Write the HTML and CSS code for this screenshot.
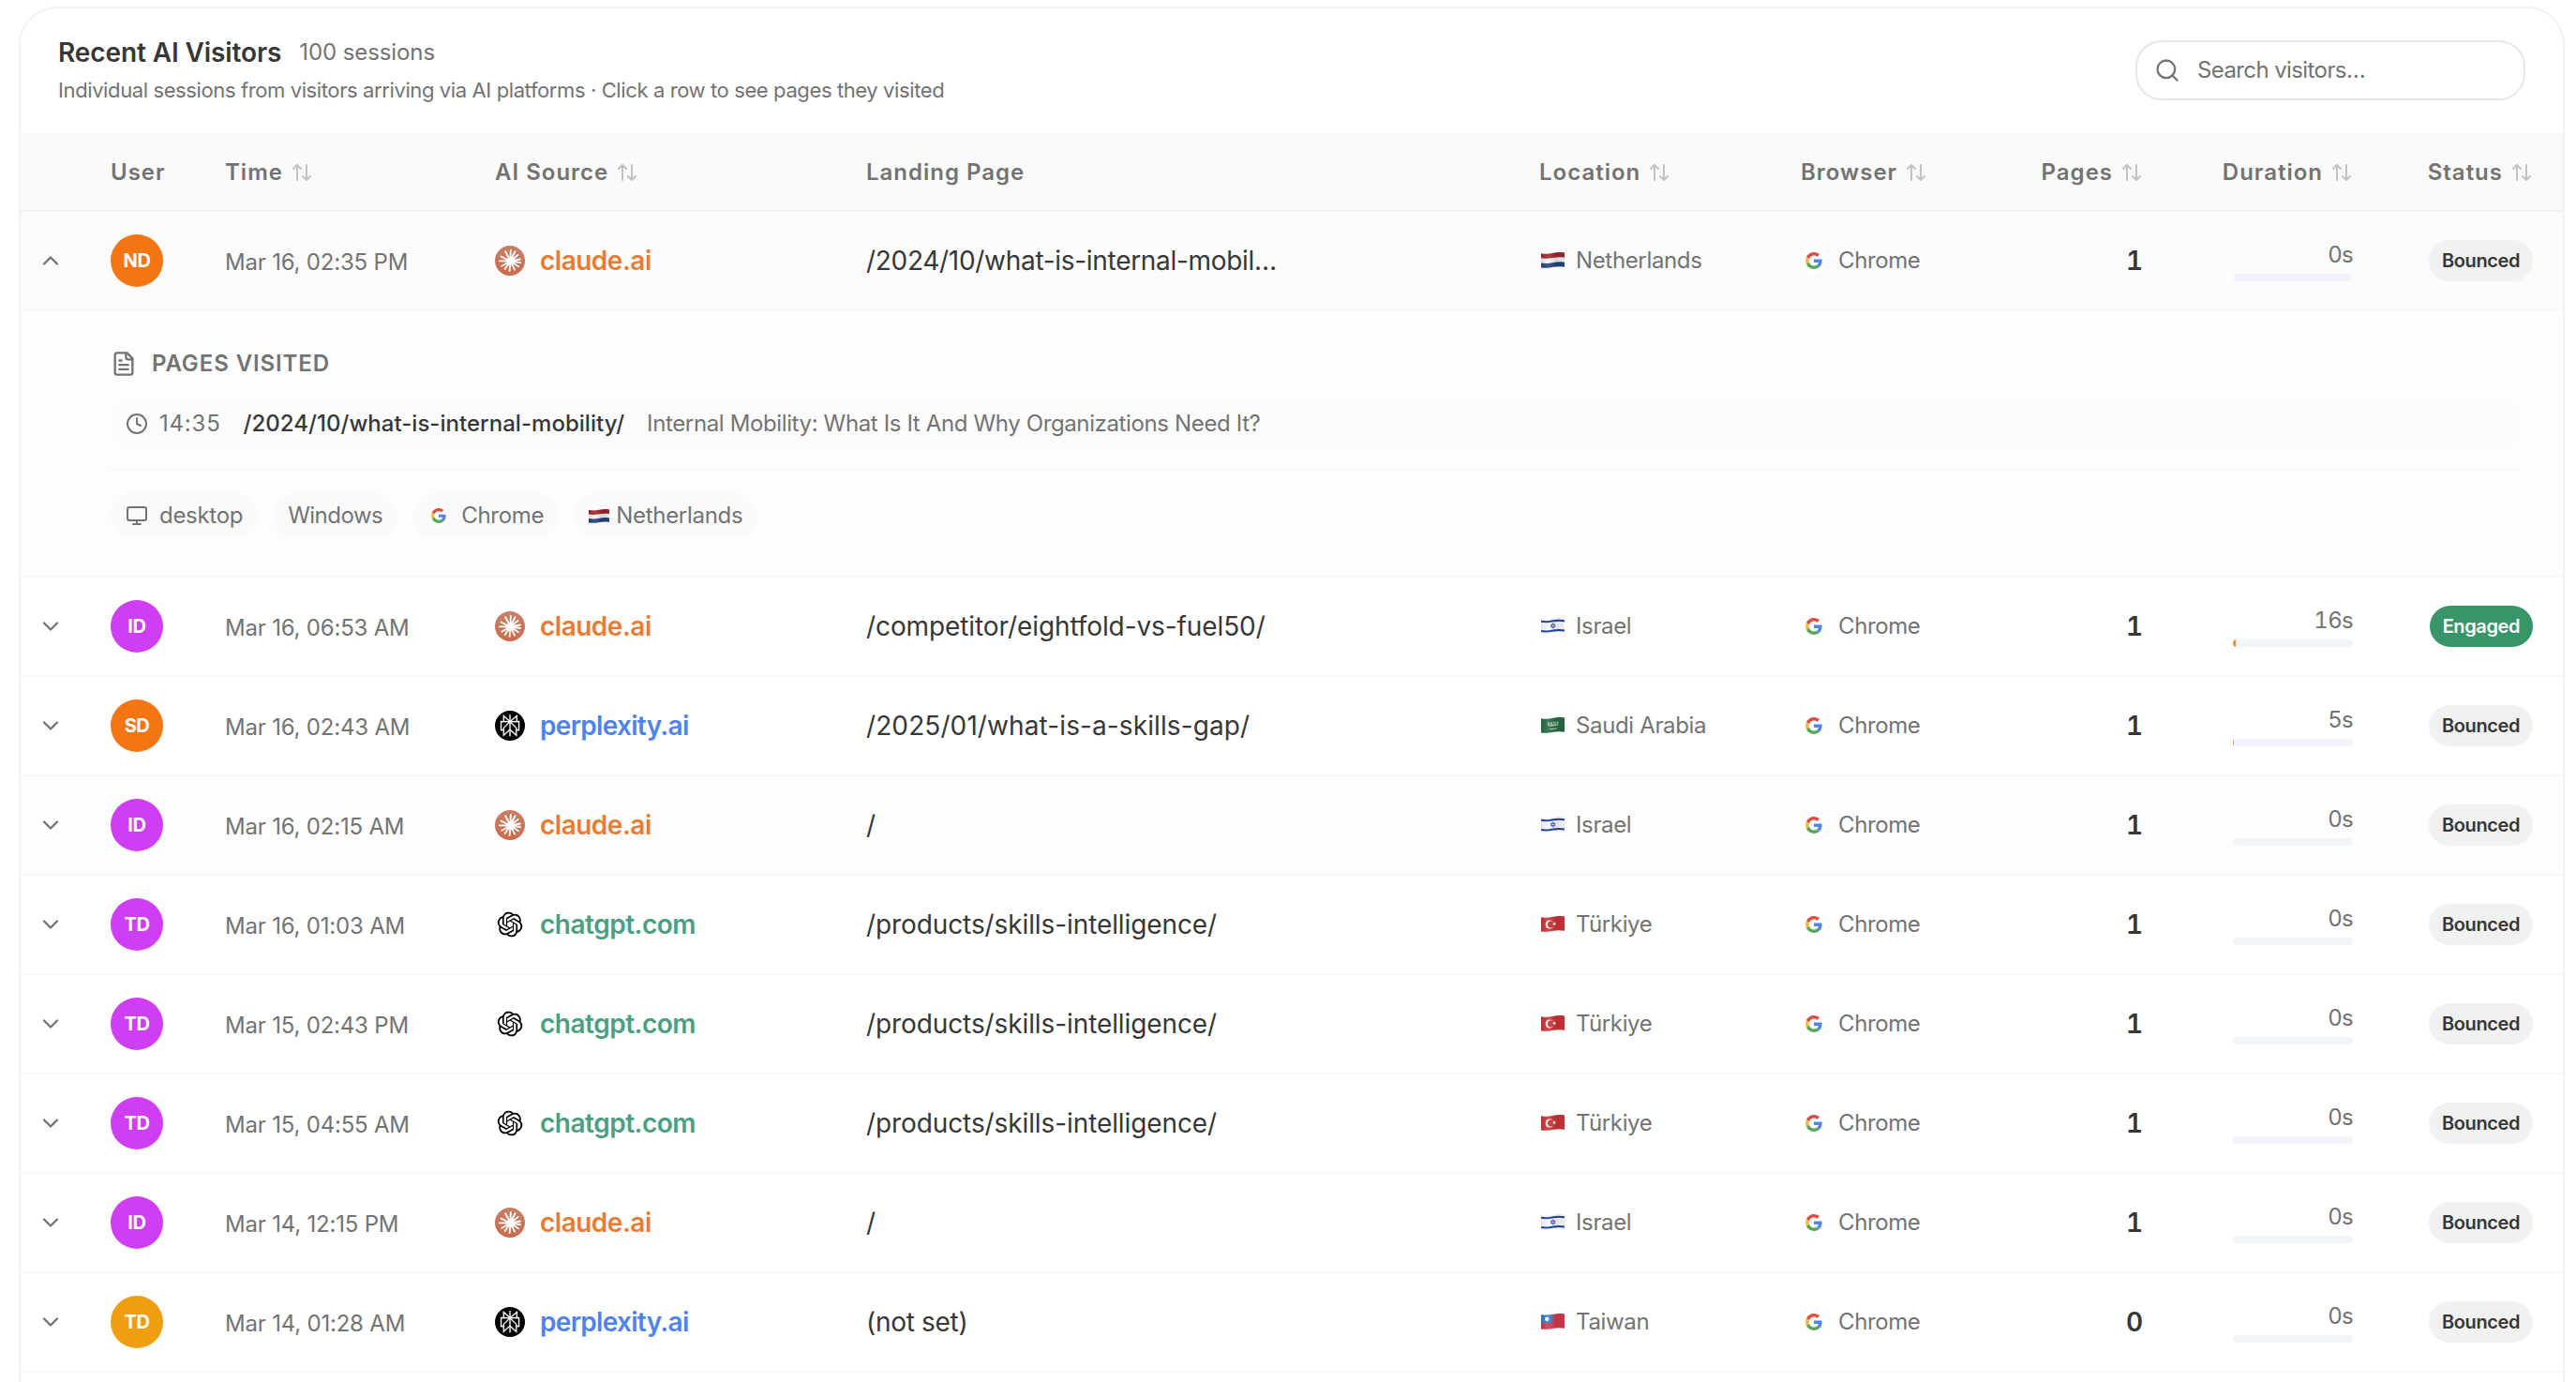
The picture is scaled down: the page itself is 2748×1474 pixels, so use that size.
FILE: index.html
```
<!DOCTYPE html>
<html lang="en">
<head>
	<meta charset="UTF-8">
	<title>Recent AI Visitors</title>
	<link rel="stylesheet" href="styles.css">
</head>
<body>

<!-- Icons shared by the rows -->
<svg class="sprite" width="0" height="0">
	<defs>
		<linearGradient id="wave" x1="0" x2="1" y1="0" y2="0">
			<stop offset="0" stop-color="#000" stop-opacity=".12"/>
			<stop offset=".3" stop-color="#fff" stop-opacity=".1"/>
			<stop offset=".65" stop-color="#000" stop-opacity=".12"/>
			<stop offset="1" stop-color="#000" stop-opacity=".05"/>
		</linearGradient>
		<linearGradient id="clay" x1="0" x2="0" y1="0" y2="1">
			<stop offset="0" stop-color="#c97f66"/>
			<stop offset="1" stop-color="#cc6a4b"/>
		</linearGradient>
		<clipPath id="flagShape">
			<path d="M0 1.200C5 2.200 9 1.600 13 .8 17 0 21-.2 25 .6v15.200c-4-.8-8-.7-12 0-4 .8-8 1.600-13 .6z"/>
		</clipPath>
	</defs>
	<symbol id="i-sort" viewBox="0 0 24 24">
		<path d="m21 16-4 4-4-4M17 20V4M3 8l4-4 4 4M7 4v16"/>
	</symbol>
	<symbol id="i-down" viewBox="0 0 24 24"><path d="m6 9 6 6 6-6"/></symbol>
	<symbol id="i-up" viewBox="0 0 24 24"><path d="m18 15-6-6-6 6"/></symbol>
	<symbol id="i-claude" viewBox="0 0 32 32">
		<circle cx="16" cy="16" r="16" fill="url(#clay)"/>
		<g stroke="#fff" stroke-width="1.900" stroke-linecap="round">
			<path d="M16.500 16.500 16.800 5M16.500 16.500 21.500 6.200M16.500 16.500 24.500 10M16.500 16.500 27 14.500M16.500 16.500 27 18M16.500 16.500 25 22.200M16.500 16.500 21 25.600M16.500 16.500 15.600 27M16.500 16.500 10.600 25M16.500 16.500 7.300 21.800M16.500 16.500 5 16.400M16.500 16.500 6.500 11.600M16.500 16.500 11.200 6.200"/>
		</g>
		<circle cx="16.300" cy="16.400" r="3.200" fill="#fff"/>
	</symbol>
	<symbol id="i-perplexity" viewBox="0 0 32 32">
		<circle cx="16" cy="16" r="16" fill="#000"/>
		<path transform="translate(4.400 4.200) scale(.97)" fill="#fff" stroke="#fff" stroke-width=".3" d="M22.3977 7.0896h-2.3106V.0676l-7.5094 6.3542V.1577h-1.1554v6.1966L4.4904 0v7.0896H1.6023v10.3976h2.8882V24l6.932-6.3591v6.2005h1.1554v-6.0469l6.9318 6.1807v-6.4879h2.8882V7.0896zm-3.4657-4.531v4.531h-5.355l5.355-4.531zm-13.2862.0676 4.8691 4.4634H5.6458V2.6262zM2.7576 16.332V8.245h7.8476l-6.1149 6.1147v1.9723H2.7576zm2.8882 5.0404v-3.8852h.0001v-2.6488l5.7763-5.7764v7.0111l-5.7764 5.2993zm12.7086.0248-5.7766-5.1509V9.0618l5.7766 5.7766v6.5588zm2.8882-5.0652h-1.733v-1.9723L13.3948 8.245h7.8478v8.087z"/>
	</symbol>
	<symbol id="i-openai" viewBox="0 0 32 32">
		<path transform="translate(2.700 2.700) scale(1.110)" fill="#000" d="M22.2819 9.8211a5.9847 5.9847 0 0 0-.5157-4.9108 6.0462 6.0462 0 0 0-6.5098-2.9A6.0651 6.0651 0 0 0 4.9807 4.1818a5.9847 5.9847 0 0 0-3.9977 2.9 6.0462 6.0462 0 0 0 .7427 7.0966 5.98 5.98 0 0 0 .511 4.9107 6.051 6.051 0 0 0 6.5146 2.9001A5.9847 5.9847 0 0 0 13.2599 24a6.0557 6.0557 0 0 0 5.7718-4.2058 5.9894 5.9894 0 0 0 3.9977-2.9001 6.0557 6.0557 0 0 0-.7475-7.0729zm-9.022 12.6081a4.4755 4.4755 0 0 1-2.8764-1.0408l.1419-.0804 4.7783-2.7582a.7948.7948 0 0 0 .3927-.6813v-6.7369l2.02 1.1686a.071.071 0 0 1 .038.052v5.5826a4.504 4.504 0 0 1-4.4945 4.4944zm-9.6607-4.1254a4.4708 4.4708 0 0 1-.5346-3.0137l.142.0852 4.783 2.7582a.7712.7712 0 0 0 .7806 0l5.8428-3.3685v2.3324a.0804.0804 0 0 1-.0332.0615L9.74 19.9502a4.4992 4.4992 0 0 1-6.1408-1.6464zM2.3408 7.8956a4.485 4.485 0 0 1 2.3655-1.9728V11.6a.7664.7664 0 0 0 .3879.6765l5.8144 3.3543-2.0201 1.1685a.0757.0757 0 0 1-.071 0l-4.8303-2.7865A4.504 4.504 0 0 1 2.3408 7.872zm16.5963 3.8558L13.1038 8.364 15.1192 7.2a.0757.0757 0 0 1 .071 0l4.8303 2.7913a4.4944 4.4944 0 0 1-.6765 8.1042v-5.6772a.79.79 0 0 0-.407-.667zm2.0107-3.0231l-.142-.0852-4.7735-2.7818a.7759.7759 0 0 0-.7854 0L9.409 9.2297V6.8974a.0662.0662 0 0 1 .0284-.0615l4.8303-2.7866a4.4992 4.4992 0 0 1 6.6802 4.66zM8.3065 12.863l-2.02-1.1638a.0804.0804 0 0 1-.038-.0567V6.0742a4.4992 4.4992 0 0 1 7.3757-3.4537l-.142.0805L8.704 5.459a.7948.7948 0 0 0-.3927.6813zm1.0976-2.3654l2.602-1.4998 2.6069 1.4998v2.9994l-2.5974 1.4997-2.6067-1.4997Z"/>
	</symbol>
	<symbol id="i-google" viewBox="0 0 48 48">
		<path fill="#db4f43" d="M24 9.500c3.540 0 6.710 1.220 9.210 3.600l6.850-6.850C35.900 2.380 30.470 0 24 0 14.620 0 6.510 5.380 2.560 13.220l7.980 6.190C12.430 13.720 17.740 9.500 24 9.500z"/>
		<path fill="#5085ec" d="M46.980 24.550c0-1.570-.15-3.090-.38-4.550H24v9.020h12.940c-.58 2.960-2.260 5.480-4.780 7.180l7.730 6c4.510-4.180 7.090-10.360 7.090-17.650z"/>
		<path fill="#f2bd42" d="M10.530 28.590c-.48-1.450-.76-2.990-.76-4.590s.27-3.140.76-4.590l-7.980-6.190C.92 16.460 0 20.120 0 24c0 3.880.92 7.540 2.560 10.780l7.970-6.190z"/>
		<path fill="#58a65c" d="M24 48c6.480 0 11.930-2.130 15.890-5.810l-7.730-6c-2.150 1.450-4.920 2.300-8.160 2.300-6.260 0-11.570-4.220-13.470-9.910l-7.980 6.190C6.510 42.620 14.620 48 24 48z"/>
	</symbol>
	<symbol id="f-nl" viewBox="0 0 25 17">
		<g clip-path="url(#flagShape)">
			<path fill="#f4f4f4" d="M0 0h25v17H0z"/>
			<path fill="#a3262d" d="M0 0h25v5.700c-4-.7-8-.5-12 .2S5 7.200 0 6.300z"/>
			<path fill="#27427f" d="M0 11.400c5 .9 9 .4 13-.4s8-.9 12-.2V17H0z"/>
			<path fill="url(#wave)" d="M0 0h25v17H0z"/>
		</g>
	</symbol>
	<symbol id="f-il" viewBox="0 0 25 17">
		<g clip-path="url(#flagShape)">
			<path fill="#f6f6f6" d="M0 0h25v17H0z"/>
			<path fill="none" stroke="#1e3fa5" stroke-width="2" d="M0 3.700c5 1 9 .4 13-.4s8-.8 12-.1M0 14c5 1 9 .4 13-.4s8-.8 12-.1"/>
			<path fill="none" stroke="#1e3fa5" stroke-width=".7" d="M12.700 5.700l2.300 4h-4.600zM12.700 11.200l-2.300-4h4.600z"/>
			<path fill="url(#wave)" opacity=".6" d="M0 0h25v17H0z"/>
		</g>
	</symbol>
	<symbol id="f-sa" viewBox="0 0 25 17">
		<g clip-path="url(#flagShape)">
			<path fill="#286c43" d="M0 0h25v17H0z"/>
			<path fill="none" stroke="#d5e5da" stroke-width=".9" d="M7.500 5.300v3.400M9 5.200l1.200 3.500M11.500 5v3.200h1.200M14 4.600v3.500M15.500 4.700l.6 3M17.800 4.200v3.500M7.500 9h4.500l6-1M9 12.700l4-.2 4-.7"/>
			<path fill="url(#wave)" d="M0 0h25v17H0z"/>
		</g>
	</symbol>
	<symbol id="f-tr" viewBox="0 0 25 17">
		<g clip-path="url(#flagShape)">
			<path fill="#cf3338" d="M0 0h25v17H0z"/>
			<circle cx="9.200" cy="9" r="4.600" fill="#fff"/>
			<circle cx="10.500" cy="8.900" r="3.600" fill="#cf3338"/>
			<path fill="#fff" d="m14 6.100.6 1.500 1.600-.1-1.200 1.100.7 1.500-1.500-.8-1.200 1.100.2-1.600-1.400-.8 1.600-.3z"/>
			<path fill="url(#wave)" d="M0 0h25v17H0z"/>
		</g>
	</symbol>
	<symbol id="f-tw" viewBox="0 0 25 17">
		<g clip-path="url(#flagShape)">
			<path fill="#d63a4e" d="M0 0h25v17H0z"/>
			<path fill="#2f7fd0" d="M0 0h12.500v9.200C9 10.200 4 10.600 0 9.800z"/>
			<circle cx="6.200" cy="5.800" r="2.200" fill="#fff"/>
			<path fill="url(#wave)" d="M0 0h25v17H0z"/>
		</g>
	</symbol>
</svg>

<div class="card">
	<div class="card-head">
		<div>
			<div class="title-line">
				<h2>Recent AI Visitors</h2>
				<span class="count">100 sessions</span>
			</div>
			<p class="subtitle">Individual sessions from visitors arriving via AI platforms · Click a row to see pages they visited</p>
		</div>
		<label class="search">
			<svg class="icon i28" viewBox="0 0 24 24"><circle cx="11" cy="11" r="8"/><path d="m21 21-4.300-4.300"/></svg>
			<input type="text" placeholder="Search visitors…">
		</label>
	</div>

	<table class="visitors">
		<colgroup>
			<col class="c-toggle"><col class="c-user"><col class="c-time"><col class="c-source"><col class="c-page">
			<col class="c-location"><col class="c-pages"><col class="c-duration"><col class="c-status">
			<col class="c-edge">
		</colgroup>
		<thead>
			<tr>
				<th></th>
				<th>User</th>
				<th><span class="sort">Time<svg><use href="#i-sort"/></svg></span></th>
				<th><span class="sort">AI Source<svg><use href="#i-sort"/></svg></span></th>
				<th>Landing Page</th>
				<th><span class="sort">Location<svg><use href="#i-sort"/></svg></span></th>
				<th><div class="browser-pages"><span class="sort">Browser<svg><use href="#i-sort"/></svg></span><span class="sort">Pages<svg><use href="#i-sort"/></svg></span></div></th>
				<th class="right"><span class="sort">Duration<svg><use href="#i-sort"/></svg></span></th>
				<th class="right"><span class="sort">Status<svg><use href="#i-sort"/></svg></span></th>
				<th></th>
			</tr>
		</thead>
		<tbody>
			<tr class="open">
				<td class="toggle"><svg class="icon i28"><use href="#i-up"/></svg></td>
				<td><span class="avatar orange">ND</span></td>
				<td class="time">Mar 16, 02:35 PM</td>
				<td><span class="source claude"><svg><use href="#i-claude"/></svg>claude.ai</span></td>
				<td class="path cut">/2024/10/what-is-internal-mobil…</td>
				<td><span class="place"><svg><use href="#f-nl"/></svg>Netherlands</span></td>
				<td><div class="browser-pages"><span class="browser"><i><svg><use href="#i-google"/></svg></i>Chrome</span><b>1</b></div></td>
				<td class="duration">0s<div class="bar"></div></td>
				<td class="right"><span class="badge">Bounced</span></td>
				<td></td>
			</tr>
			<tr class="detail">
				<td colspan="10">
					<div class="panel">
						<h3><svg class="icon i28" viewBox="0 0 24 24"><path d="M15 2H6a2 2 0 0 0-2 2v16a2 2 0 0 0 2 2h12a2 2 0 0 0 2-2V7z"/><path d="M14 2v4a2 2 0 0 0 2 2h4M10 9H8M16 13H8M16 17H8"/></svg>Pages Visited</h3>
						<div class="visit">
							<svg class="icon i24" viewBox="0 0 24 24"><circle cx="12" cy="12" r="10"/><path d="M12 6v6l4 2"/></svg>
							<span class="clock">14:35</span>
							<span class="visit-path">/2024/10/what-is-internal-mobility/</span>
							<span class="visit-title">Internal Mobility: What Is It And Why Organizations Need It?</span>
						</div>
						<div class="chips">
							<span class="chip"><svg class="icon i24" viewBox="0 0 24 24"><rect width="20" height="14" x="2" y="3" rx="2"/><path d="M8 21h8M12 17v4"/></svg>desktop</span>
							<span class="chip os">Windows</span>
							<span class="chip browser-chip"><i><svg><use href="#i-google"/></svg></i>Chrome</span>
							<span class="chip place-chip"><svg><use href="#f-nl"/></svg>Netherlands</span>
						</div>
					</div>
				</td>
			</tr>
			<tr>
				<td class="toggle"><svg class="icon i28"><use href="#i-down"/></svg></td>
				<td><span class="avatar purple">ID</span></td>
				<td class="time">Mar 16, 06:53 AM</td>
				<td><span class="source claude"><svg><use href="#i-claude"/></svg>claude.ai</span></td>
				<td class="path">/competitor/eightfold-vs-fuel50/</td>
				<td><span class="place"><svg><use href="#f-il"/></svg>Israel</span></td>
				<td><div class="browser-pages"><span class="browser"><i><svg><use href="#i-google"/></svg></i>Chrome</span><b>1</b></div></td>
				<td class="duration">16s<div class="bar"><div style="width: 2.6%"></div></div></td>
				<td class="right"><span class="badge engaged">Engaged</span></td>
				<td></td>
			</tr>
			<tr>
				<td class="toggle"><svg class="icon i28"><use href="#i-down"/></svg></td>
				<td><span class="avatar orange">SD</span></td>
				<td class="time">Mar 16, 02:43 AM</td>
				<td><span class="source perplexity"><svg><use href="#i-perplexity"/></svg>perplexity.ai</span></td>
				<td class="path wide">/2025/01/what-is-a-skills-gap/</td>
				<td><span class="place"><svg><use href="#f-sa"/></svg>Saudi Arabia</span></td>
				<td><div class="browser-pages"><span class="browser"><i><svg><use href="#i-google"/></svg></i>Chrome</span><b>1</b></div></td>
				<td class="duration">5s<div class="bar"><div style="width: 0.8%"></div></div></td>
				<td class="right"><span class="badge">Bounced</span></td>
				<td></td>
			</tr>
			<tr class="hover">
				<td class="toggle"><svg class="icon i28"><use href="#i-down"/></svg></td>
				<td><span class="avatar purple">ID</span></td>
				<td class="time">Mar 16, 02:15 AM</td>
				<td><span class="source claude"><svg><use href="#i-claude"/></svg>claude.ai</span></td>
				<td class="path">/</td>
				<td><span class="place"><svg><use href="#f-il"/></svg>Israel</span></td>
				<td><div class="browser-pages"><span class="browser"><i><svg><use href="#i-google"/></svg></i>Chrome</span><b>1</b></div></td>
				<td class="duration">0s<div class="bar"></div></td>
				<td class="right"><span class="badge">Bounced</span></td>
				<td></td>
			</tr>
			<tr>
				<td class="toggle"><svg class="icon i28"><use href="#i-down"/></svg></td>
				<td><span class="avatar purple">TD</span></td>
				<td class="time">Mar 16, 01:03 AM</td>
				<td><span class="source chatgpt"><svg><use href="#i-openai"/></svg>chatgpt.com</span></td>
				<td class="path">/products/skills-intelligence/</td>
				<td><span class="place"><svg><use href="#f-tr"/></svg>Türkiye</span></td>
				<td><div class="browser-pages"><span class="browser"><i><svg><use href="#i-google"/></svg></i>Chrome</span><b>1</b></div></td>
				<td class="duration">0s<div class="bar"></div></td>
				<td class="right"><span class="badge">Bounced</span></td>
				<td></td>
			</tr>
			<tr>
				<td class="toggle"><svg class="icon i28"><use href="#i-down"/></svg></td>
				<td><span class="avatar purple">TD</span></td>
				<td class="time">Mar 15, 02:43 PM</td>
				<td><span class="source chatgpt"><svg><use href="#i-openai"/></svg>chatgpt.com</span></td>
				<td class="path">/products/skills-intelligence/</td>
				<td><span class="place"><svg><use href="#f-tr"/></svg>Türkiye</span></td>
				<td><div class="browser-pages"><span class="browser"><i><svg><use href="#i-google"/></svg></i>Chrome</span><b>1</b></div></td>
				<td class="duration">0s<div class="bar"></div></td>
				<td class="right"><span class="badge">Bounced</span></td>
				<td></td>
			</tr>
			<tr>
				<td class="toggle"><svg class="icon i28"><use href="#i-down"/></svg></td>
				<td><span class="avatar purple">TD</span></td>
				<td class="time">Mar 15, 04:55 AM</td>
				<td><span class="source chatgpt"><svg><use href="#i-openai"/></svg>chatgpt.com</span></td>
				<td class="path">/products/skills-intelligence/</td>
				<td><span class="place"><svg><use href="#f-tr"/></svg>Türkiye</span></td>
				<td><div class="browser-pages"><span class="browser"><i><svg><use href="#i-google"/></svg></i>Chrome</span><b>1</b></div></td>
				<td class="duration">0s<div class="bar"></div></td>
				<td class="right"><span class="badge">Bounced</span></td>
				<td></td>
			</tr>
			<tr>
				<td class="toggle"><svg class="icon i28"><use href="#i-down"/></svg></td>
				<td><span class="avatar purple">ID</span></td>
				<td class="time">Mar 14, 12:15 PM</td>
				<td><span class="source claude"><svg><use href="#i-claude"/></svg>claude.ai</span></td>
				<td class="path">/</td>
				<td><span class="place"><svg><use href="#f-il"/></svg>Israel</span></td>
				<td><div class="browser-pages"><span class="browser"><i><svg><use href="#i-google"/></svg></i>Chrome</span><b>1</b></div></td>
				<td class="duration">0s<div class="bar"></div></td>
				<td class="right"><span class="badge">Bounced</span></td>
				<td></td>
			</tr>
			<tr>
				<td class="toggle"><svg class="icon i28"><use href="#i-down"/></svg></td>
				<td><span class="avatar amber">TD</span></td>
				<td class="time">Mar 14, 01:28 AM</td>
				<td><span class="source perplexity"><svg><use href="#i-perplexity"/></svg>perplexity.ai</span></td>
				<td class="path cut">(not set)</td>
				<td><span class="place"><svg><use href="#f-tw"/></svg>Taiwan</span></td>
				<td><div class="browser-pages"><span class="browser"><i><svg><use href="#i-google"/></svg></i>Chrome</span><b>0</b></div></td>
				<td class="duration">0s<div class="bar"></div></td>
				<td class="right"><span class="badge">Bounced</span></td>
				<td></td>
			</tr>
		</tbody>
	</table>
</div>

</body>
</html>
```
FILE: styles.css
```
* {
	box-sizing: border-box;
}

body {
	margin: 0;
	padding-top: 7px;
	height: 1474px;
	overflow: hidden;
	background: #fff;
	color: #373737;
	font: 24px/32px Inter, "Liberation Sans", sans-serif;
}

.sprite {
	position: absolute;
}

.icon {
	flex: none;
	fill: none;
	stroke: #737373;
	stroke-width: 2;
	stroke-linecap: round;
	stroke-linejoin: round;
}

.i28 {
	width: 28px;
	height: 28px;
}

.i24 {
	width: 24px;
	height: 24px;
}

.card {
	width: 2716px;
	height: 1467px;
	margin-left: 20px;
	border: 2px solid #f2f2f2;
	border-bottom: 0;
	border-radius: 40px 40px 0 0;
	overflow: hidden;
}

.card-head {
	height: 135px;
	padding: 0 40px 2px;
	display: flex;
	align-items: center;
	justify-content: space-between;
	border-bottom: 2px solid #f8f8f8;
}

.title-line {
	display: flex;
	align-items: center;
	gap: 19px;
}

h2 {
	margin: 0;
	font-size: 28px;
	line-height: 40px;
	font-weight: 600;
	letter-spacing: -0.1px;
}

.count {
	color: #737373;
	letter-spacing: -0.1px;
}

.subtitle {
	margin: 2px 0 0;
	color: #737373;
	font-size: 22px;
	line-height: 36px;
	letter-spacing: -0.39px;
}

.search {
	display: flex;
	align-items: center;
	gap: 18px;
	width: 416px;
	height: 64px;
	padding: 0 18px;
	border: 2px solid #e6e6e6;
	border-radius: 28px;
}

.search input {
	width: 300px;
	padding: 0;
	border: 0;
	outline: 0;
	background: none;
	font: inherit;
	letter-spacing: -0.6px;
}

.search input::placeholder {
	color: #737373;
}

/* table */

.visitors {
	width: 2712px;
	table-layout: fixed;
	border-collapse: separate;
	border-spacing: 0;
}

.c-toggle { width: 96px; }
.c-user { width: 122px; }
.c-time { width: 288px; }
.c-source { width: 396px; }
.c-page { width: 718px; }
.c-location { width: 279px; }
.c-pages { width: 365px; }
.c-duration { width: 224px; }
.c-status { width: 192px; }
.c-edge { width: 32px; }

th, td {
	padding: 0;
	text-align: left;
	white-space: nowrap;
	vertical-align: middle;
}

th {
	height: 82px;
	background: #fafafa;
	border-bottom: 2px solid #f1f1f1;
	color: #737373;
	font-weight: 600;
	letter-spacing: 1px;
}

td {
	height: 106px;
	border-bottom: 2px solid #f8f8f8;
}

.right {
	text-align: right;
}

.sort {
	display: inline-flex;
	align-items: center;
	gap: 8px;
}

.sort svg {
	width: 24px;
	height: 24px;
	fill: none;
	stroke: #737373;
	stroke-width: 2;
	stroke-linecap: round;
	stroke-linejoin: round;
	opacity: .4;
}

.open td {
	background: #fbfbfb;
}

.hover td {
	background: #fdfdfd;
}

.toggle {
	padding-left: 18px;
}

.toggle svg {
	display: block;
}

.avatar {
	display: flex;
	align-items: center;
	justify-content: center;
	width: 56px;
	height: 56px;
	border-radius: 50%;
	color: #fff;
	font-size: 20px;
	font-weight: 700;
	letter-spacing: -0.4px;
}

.orange { background: #f37514; }
.purple { background: #cf3ef3; }
.amber { background: #f09e10; }

.time {
	padding-top: 3px;
	color: #737373;
	letter-spacing: -0.2px;
}

.source {
	display: flex;
	align-items: center;
	gap: 16px;
	font-size: 28px;
	font-weight: 560;
	letter-spacing: -0.5px;
}

.source svg {
	width: 32px;
	height: 32px;
}

.claude { color: #e97c35; }
.perplexity { color: #4f82ee; letter-spacing: -0.7px; }
.chatgpt { color: #4ba082; }

.path {
	font-size: 28px;
	letter-spacing: -0.1px;
}

.path.cut {
	letter-spacing: -0.3px;
}

.path.wide {
	letter-spacing: 0.1px;
}

.place {
	display: flex;
	align-items: center;
	gap: 12px;
	color: #737373;
	letter-spacing: -0.35px;
}

.place svg {
	width: 25px;
	height: 17px;
	margin: 0 0 2px 2px;
}

.browser-pages {
	display: flex;
	align-items: center;
	justify-content: space-between;
}

.browser-pages b {
	font-size: 28px;
	font-weight: 600;
	font-feature-settings: "tnum";
}

.browser {
	display: flex;
	align-items: center;
	gap: 12px;
	color: #737373;
	letter-spacing: -0.4px;
}

.browser i,
.browser-chip i {
	display: flex;
	align-items: center;
	justify-content: center;
	width: 28px;
	height: 28px;
	border-radius: 50%;
	background: #fff;
}

.browser svg {
	width: 18px;
	height: 18px;
}

.duration {
	color: #737373;
	text-align: right;
	letter-spacing: -0.7px;
	font-feature-settings: "tnum";
}

.bar {
	width: 128px;
	height: 8px;
	margin: 4px 0 0 auto;
	border-radius: 4px;
	background: #f1f5fa;
	overflow: hidden;
}

.bar div {
	height: 8px;
	background: #f68c2c;
}

.badge {
	display: inline-block;
	height: 44px;
	padding: 0 14px;
	border-radius: 22px;
	background: #f1f1f1;
	font-size: 20px;
	font-weight: 560;
	line-height: 44px;
	letter-spacing: -0.4px;
	vertical-align: middle;
}

.badge.engaged {
	background: #379569;
	color: #fff;
}

/* expanded row */

.detail td {
	height: 284px;
	background: #fdfdfd;
	color: #737373;
	vertical-align: top;
}

.panel {
	padding: 36px 46px 0 96px;
}

h3 {
	display: flex;
	align-items: center;
	gap: 16px;
	height: 40px;
	margin: 0 0 20px;
	font-size: 24px;
	font-weight: 600;
	letter-spacing: 0.9px;
	text-transform: uppercase;
}

.visit {
	display: flex;
	align-items: center;
	height: 48px;
	padding: 0 16px;
	border-radius: 16px;
	background: #fcfcfc;
}

.clock {
	margin-left: 12px;
	letter-spacing: 0.8px;
}

.visit-path {
	margin: 0 24px;
	color: #373737;
	font-weight: 530;
	letter-spacing: 0.03px;
}

.visit-title {
	letter-spacing: -0.37px;
}

.chips {
	display: flex;
	gap: 16px;
	margin-top: 24px;
	padding-top: 24px;
	border-top: 2px solid #f7f7f7;
}

.chip {
	display: flex;
	align-items: center;
	gap: 12px;
	height: 48px;
	padding: 0 16px;
	border-radius: 24px;
	background: #fafafa;
	letter-spacing: -0.3px;
}

.chip.os {
	letter-spacing: -0.5px;
}

.browser-chip i {
	width: 24px;
	height: 24px;
}

.browser-chip svg {
	width: 16px;
	height: 16px;
}

.place-chip {
	gap: 7px;
}

.place-chip svg {
	width: 22px;
	height: 15px;
}
```
